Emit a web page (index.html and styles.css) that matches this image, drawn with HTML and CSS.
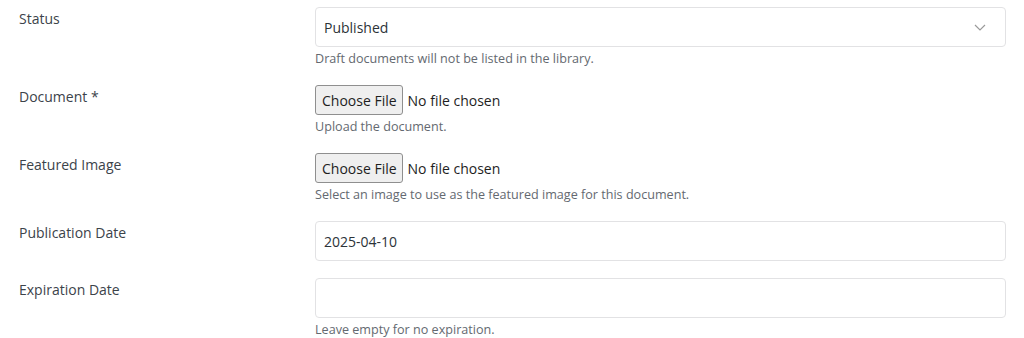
FILE: index.html
```html
<!DOCTYPE html>
<html lang="en">
<head>
<meta charset="utf-8">
<title>Document settings</title>
<link rel="stylesheet" href="styles.css">
</head>
<body>
<form class="form">
  <div class="row">
    <label class="label">Status</label>
    <div class="field">
      <div class="select">
        <span class="select-value">Published</span>
        <svg class="chevron" width="12" height="7" viewBox="0 0 12 7"><path d="M1 1l5 5 5-5" fill="none" stroke="#9a9a9a" stroke-width="1.2"/></svg>
      </div>
      <p class="desc">Draft documents will not be listed in the library.</p>
    </div>
  </div>
  <div class="row">
    <label class="label">Document *</label>
    <div class="field">
      <div class="file">
        <span class="file-btn">Choose File</span>
        <span class="file-text">No file chosen</span>
      </div>
      <p class="desc">Upload the document.</p>
    </div>
  </div>
  <div class="row">
    <label class="label">Featured Image</label>
    <div class="field">
      <div class="file">
        <span class="file-btn">Choose File</span>
        <span class="file-text">No file chosen</span>
      </div>
      <p class="desc">Select an image to use as the featured image for this document.</p>
    </div>
  </div>
  <div class="row">
    <label class="label">Publication Date</label>
    <div class="field">
      <input class="input" type="text" value="2025-04-10">
    </div>
  </div>
  <div class="row">
    <label class="label">Expiration Date</label>
    <div class="field">
      <input class="input" type="text" value="">
      <p class="desc">Leave empty for no expiration.</p>
    </div>
  </div>
</form>
</body>
</html>
```

FILE: styles.css
```css
html, body {
  margin: 0;
  padding: 0;
  background: #ffffff;
}

body {
  font-family: "Open Sans", "Noto Sans", sans-serif;
  color: #3c434a;
}

.form {
  display: flex;
  flex-direction: column;
  gap: 17px;
  padding: 7px 18px 0 19px;
}

.row {
  display: grid;
  grid-template-columns: 296px 691px;
}

.label {
  font-size: 14px;
  line-height: 20px;
  padding-top: 2px;
  color: #3c434a;
}

.field {
  display: flex;
  flex-direction: column;
}

.select {
  box-sizing: border-box;
  height: 40px;
  border: 1px solid #e2e2e4;
  border-radius: 4px;
  display: flex;
  align-items: center;
  justify-content: space-between;
  padding: 0 19px 0 8px;
}

.select-value {
  font-size: 14px;
  color: #2c3338;
}

.chevron {
  display: block;
}

.desc {
  margin: 3px 0 0;
  font-size: 12.6px;
  line-height: 18px;
  color: #646970;
}

.file {
  display: flex;
  align-items: center;
  gap: 5px;
  height: 30px;
}

.file-btn {
  box-sizing: border-box;
  height: 30px;
  padding: 0 5px 0 6px;
  display: flex;
  align-items: center;
  font-size: 14px;
  color: #1e1e1e;
  background: #efefef;
  border: 1px solid #8f8f8f;
  border-radius: 3px;
}

.file-text {
  font-size: 14px;
  color: #1e1e1e;
}

.input {
  box-sizing: border-box;
  width: 100%;
  height: 40px;
  margin: 0;
  border: 1px solid #e2e2e4;
  border-radius: 4px;
  padding: 0 8px;
  font-family: "Open Sans", "Noto Sans", sans-serif;
  font-size: 14px;
  color: #2c3338;
  background: #ffffff;
  outline: none;
}
```
